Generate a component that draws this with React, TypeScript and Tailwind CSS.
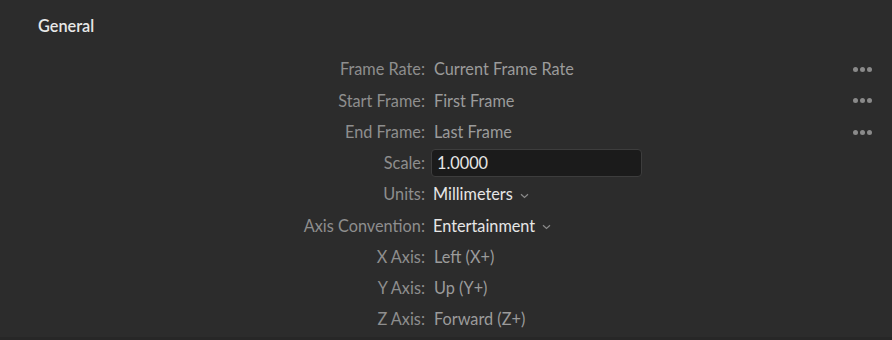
const rows: { label: string; value: string; kind: "text" | "input" | "select"; dots?: boolean }[] = [
  { label: "Frame Rate:", value: "Current Frame Rate", kind: "text", dots: true },
  { label: "Start Frame:", value: "First Frame", kind: "text", dots: true },
  { label: "End Frame:", value: "Last Frame", kind: "text", dots: true },
  { label: "Scale:", value: "1.0000", kind: "input" },
  { label: "Units:", value: "Millimeters", kind: "select" },
  { label: "Axis Convention:", value: "Entertainment", kind: "select" },
  { label: "X Axis:", value: "Left (X+)", kind: "text" },
  { label: "Y Axis:", value: "Up (Y+)", kind: "text" },
  { label: "Z Axis:", value: "Forward (Z+)", kind: "text" },
];

function Dots() {
  return (
    <div className="flex items-center gap-[2px]">
      <span className="size-[5px] rounded-full bg-[#8a8a8a]" />
      <span className="size-[5px] rounded-full bg-[#8a8a8a]" />
      <span className="size-[5px] rounded-full bg-[#8a8a8a]" />
    </div>
  );
}

function Chevron() {
  return (
    <svg width="9" height="6" viewBox="0 0 9 6" className="ml-[7px] mt-[2px]">
      <path d="M1 1.2 L4.5 4.5 L8 1.2" fill="none" stroke="#8a8a8a" strokeWidth="1.2" />
    </svg>
  );
}

export default function App() {
  return (
    <div className="flex h-[340px] w-[892px] flex-col bg-[#2c2c2c] font-['Lato',sans-serif] text-[16.3px]">
      <div className="flex h-[54px] items-start pl-[38px] pt-[14px]">
        <span className="font-semibold text-[#e8e8e8]">General</span>
      </div>
      <div className="flex flex-col">
        {rows.map((r) => (
          <div key={r.label} className="grid h-[31.25px] grid-cols-[425px_1fr_39px] items-center">
            <span className="text-right text-[#8e8e8e]">{r.label}</span>
            <div className="flex items-center pl-[9px]">
              {r.kind === "input" ? (
                <div className="-ml-[3px] flex h-[28px] w-[211px] items-center rounded-[4px] border border-[#3d3d3d] bg-[#1b1b1b] px-[5px] text-[#e6e6e6]">
                  {r.value}
                </div>
              ) : r.kind === "select" ? (
                <>
                  <span className="-ml-[1px] text-[#e6e6e6]">{r.value}</span>
                  <Chevron />
                </>
              ) : (
                <span className="text-[#9b9b9b]">{r.value}</span>
              )}
            </div>
            <div className="flex justify-start">{r.dots && <Dots />}</div>
          </div>
        ))}
      </div>
      <div className="mt-auto h-[3px] bg-[#272727]" />
    </div>
  );
}
